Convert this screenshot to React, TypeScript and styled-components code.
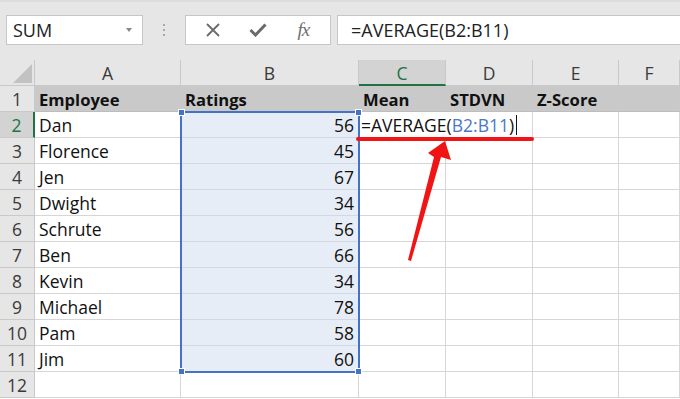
import React from 'react'
import styled, { createGlobalStyle, css } from 'styled-components'

const GlobalStyle = createGlobalStyle`
  body {
    margin: 0;
    font-family: 'Open Sans', 'Noto Sans', sans-serif;
    background: #ffffff;
  }
`

const Page = styled.div`
  position: relative;
  width: 680px;
  height: 399px;
  overflow: hidden;
  background: #ffffff;
`

const Toolbar = styled.div`
  height: 60px;
  box-sizing: border-box;
  background: #e6e6e6;
  border-top: 2px solid #dcdcdc;
  display: flex;
  align-items: flex-start;
  padding: 13px 0 0 6px;
`

const NameBox = styled.div`
  width: 137px;
  height: 30px;
  box-sizing: border-box;
  background: #ffffff;
  border: 1px solid #c6c6c6;
  display: flex;
  align-items: center;
  justify-content: space-between;
  padding: 0 10px 0 6px;
  font-size: 18px;
  color: #222;
`

const DropArrow = styled.span`
  width: 0;
  height: 0;
  border-left: 3.5px solid transparent;
  border-right: 3.5px solid transparent;
  border-top: 4px solid #888;
`

const Grip = styled.div`
  width: 42px;
  height: 30px;
  display: flex;
  flex-direction: column;
  align-items: center;
  justify-content: center;
  gap: 3px;
`

const GripDot = styled.span`
  width: 2px;
  height: 2px;
  background: #a8a8a8;
`

const ButtonBox = styled.div`
  width: 146px;
  height: 30px;
  box-sizing: border-box;
  background: #ffffff;
  border: 1px solid #c6c6c6;
  display: flex;
  align-items: center;
  justify-content: space-around;
  padding: 0 4px;
`

const IconButton = styled.span`
  width: 32px;
  height: 30px;
  display: flex;
  align-items: center;
  justify-content: center;
`

const FxLabel = styled.span`
  font-family: 'Liberation Serif', 'DejaVu Serif', serif;
  font-style: italic;
  font-size: 19px;
  color: #707070;
  letter-spacing: -1px;
`

const FormulaBox = styled.div`
  flex: 1;
  margin-left: 6px;
  height: 30px;
  box-sizing: border-box;
  background: #ffffff;
  border: 1px solid #c6c6c6;
  border-right: none;
  display: flex;
  align-items: center;
  padding-left: 13px;
  font-size: 18px;
  color: #222;
`

const Sheet = styled.div`
  display: grid;
  grid-template-columns: 35px 146px 178px 87px 87px 86px 1fr;
  grid-auto-rows: 26px;
`

type CellKind = 'colHead' | 'rowHead' | 'title' | 'data'

const Cell = styled.div<{
  $kind: CellKind
  $active?: boolean
  $range?: boolean
  $right?: boolean
}>`
  box-sizing: border-box;
  display: flex;
  align-items: center;
  padding: 1px 4px 0;
  font-size: 17.5px;
  white-space: nowrap;
  overflow: visible;
  color: #111;
  background: #ffffff;
  border-right: 1px solid #d6d6d6;
  border-bottom: 1px solid #d6d6d6;
  ${(p) => p.$right && css`justify-content: flex-end;`}
  ${(p) => p.$range && css`background: #e7edf7; border-bottom-color: #d3d9e3;`}

  ${(p) =>
    p.$kind === 'title' &&
    css`
      background: #c9c9c9;
      font-weight: 700;
      font-size: 16.6px;
      border-right-color: #c9c9c9;
      border-bottom-color: #bdbdbd;
    `}

  ${(p) =>
    (p.$kind === 'colHead' || p.$kind === 'rowHead') &&
    css`
      background: #e6e6e6;
      color: #3a3a3a;
      justify-content: center;
      padding: 1px 0 0;
      border-right-color: #c9c9c9;
      border-bottom-color: #c9c9c9;
    `}

  ${(p) =>
    p.$kind === 'colHead' &&
    p.$active &&
    css`
      background: #d3d3d3;
      color: #217346;
      border-bottom: 2px solid #217346;
    `}

  ${(p) =>
    p.$kind === 'rowHead' &&
    p.$active &&
    css`
      background: #d3d3d3;
      color: #217346;
      border-right: 2px solid #217346;
    `}
`

const Corner = styled.div`
  box-sizing: border-box;
  background: #e6e6e6;
  border-right: 1px solid #c9c9c9;
  border-bottom: 1px solid #c9c9c9;
  display: flex;
  align-items: flex-end;
  justify-content: flex-end;
  padding: 0 2px 2px 0;
`

const CornerTriangle = styled.span`
  width: 0;
  height: 0;
  border-left: 19px solid transparent;
  border-bottom: 19px solid #c2c2c2;
`

const EditCell = styled.div`
  grid-column: span 2;
  box-sizing: border-box;
  display: flex;
  align-items: center;
  padding: 1px 0 0 1px;
  font-size: 17.5px;
  white-space: nowrap;
  color: #111;
  border-left: 1px solid #217346;
  border-right: 1px solid #d6d6d6;
  border-bottom: 1px solid #d6d6d6;
`

const Ref = styled.span`
  color: #4a78c8;
`

const Caret = styled.span`
  display: inline-block;
  width: 1px;
  height: 20px;
  margin-left: 2px;
  background: #111;
`

const Selection = styled.div`
  position: absolute;
  left: 180px;
  top: 111px;
  width: 180px;
  height: 262px;
  box-sizing: border-box;
  border: 2px solid #4472c4;
  pointer-events: none;
`

const Handle = styled.span<{ $x: 'l' | 'r'; $y: 't' | 'b' }>`
  position: absolute;
  width: 5px;
  height: 5px;
  background: #4472c4;
  border: 1px solid #ffffff;
  ${(p) => (p.$x === 'l' ? 'left: -4px;' : 'right: -4px;')}
  ${(p) => (p.$y === 't' ? 'top: -4px;' : 'bottom: -4px;')}
`

const Annotation = styled.svg`
  position: absolute;
  left: 0;
  top: 0;
  pointer-events: none;
`

const columns = ['A', 'B', 'C', 'D', 'E', 'F']

const employees: [string, number][] = [
  ['Dan', 56],
  ['Florence', 45],
  ['Jen', 67],
  ['Dwight', 34],
  ['Schrute', 56],
  ['Ben', 66],
  ['Kevin', 34],
  ['Michael', 78],
  ['Pam', 58],
  ['Jim', 60],
]

const titles = ['Employee', 'Ratings', 'Mean', 'STDVN', 'Z-Score', '']

const App: React.FC = () => {
  return (
    <Page>
      <GlobalStyle />
      <Toolbar>
        <NameBox>
          SUM
          <DropArrow />
        </NameBox>
        <Grip>
          <GripDot />
          <GripDot />
          <GripDot />
        </Grip>
        <ButtonBox>
          <IconButton>
            <svg width="14" height="14" viewBox="0 0 14 14">
              <path d="M1 1 L13 13 M13 1 L1 13" stroke="#6a6a6a" strokeWidth="1.8" />
            </svg>
          </IconButton>
          <IconButton>
            <svg width="18" height="14" viewBox="0 0 18 14">
              <path d="M1.5 7 L6.5 12 L16.5 1.5" stroke="#6a6a6a" strokeWidth="3" fill="none" />
            </svg>
          </IconButton>
          <IconButton>
            <FxLabel>fx</FxLabel>
          </IconButton>
        </ButtonBox>
        <FormulaBox>=AVERAGE(B2:B11)</FormulaBox>
      </Toolbar>

      <Sheet>
        <Corner>
          <CornerTriangle />
        </Corner>
        {columns.map((c) => (
          <Cell key={c} $kind="colHead" $active={c === 'C'}>
            {c}
          </Cell>
        ))}

        <Cell $kind="rowHead">1</Cell>
        {titles.map((t, i) => (
          <Cell key={i} $kind="title">
            {t}
          </Cell>
        ))}

        {employees.map(([name, rating], i) => (
          <React.Fragment key={name}>
            <Cell $kind="rowHead" $active={i === 0}>
              {i + 2}
            </Cell>
            <Cell $kind="data">{name}</Cell>
            <Cell $kind="data" $range $right>
              {rating}
            </Cell>
            {i === 0 ? (
              <EditCell>
                =AVERAGE(<Ref>B2:B11</Ref>)
                <Caret />
              </EditCell>
            ) : (
              <>
                <Cell $kind="data" />
                <Cell $kind="data" />
              </>
            )}
            <Cell $kind="data" />
            <Cell $kind="data" />
          </React.Fragment>
        ))}

        <Cell $kind="rowHead">12</Cell>
        {columns.map((c) => (
          <Cell key={c} $kind="data" />
        ))}
      </Sheet>

      <Selection>
        <Handle $x="l" $y="t" />
        <Handle $x="r" $y="t" />
        <Handle $x="l" $y="b" />
        <Handle $x="r" $y="b" />
      </Selection>

      <Annotation width="680" height="399" viewBox="0 0 680 399">
        <line x1="358" y1="139" x2="532" y2="139" stroke="#f01414" strokeWidth="4" strokeLinecap="round" />
        <polygon
          points="445,141 451,160 441,157 411,261 408,260 434,157 428,153"
          fill="#f01414"
        />
      </Annotation>
    </Page>
  )
}

export default App
